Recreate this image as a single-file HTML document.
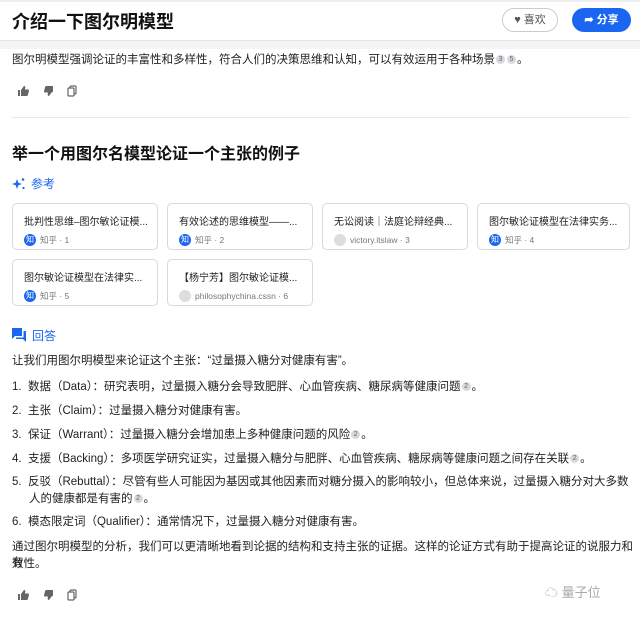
<!DOCTYPE html>
<html><head><meta charset="utf-8"><style>
*{margin:0;padding:0;box-sizing:border-box}
body{width:640px;height:620px;overflow:hidden;background:#fff;font-family:"Liberation Sans","Noto Sans CJK SC",sans-serif;color:#222;position:relative}
.abs{position:absolute}
.hdr{left:0;top:0;width:640px;height:41px;border-bottom:1px solid #e4e4ea;border-top:2px solid #eee;background:#fff}
.title{left:12px;top:8px;font-size:18px;font-weight:bold;color:#111}
.like{left:502px;top:8px;width:56px;height:24px;border:1px solid #ccc;border-radius:13px;font-size:11px;color:#555;line-height:22px;text-align:center}
.share{left:572px;top:8px;width:59px;height:24px;background:#1a66f0;border-radius:13px;font-size:11px;color:#fff;line-height:24px;text-align:center;font-weight:bold}
.t{font-size:11.5px;color:#222;left:12px}
.cite{display:inline-block;width:9px;height:9px;border-radius:50%;background:#d8d8de;font-size:7px;color:#666;text-align:center;line-height:9px;vertical-align:middle;margin:0 1px}
.icons{left:18px}
.div{left:12px;top:117px;width:618px;height:1px;background:#e8e8ec}
.h2{left:12px;top:140px;font-size:16px;font-weight:bold;color:#111}
.sec{left:12px;font-size:12px;color:#1a66f0;display:flex;align-items:center;gap:5px}
.card{width:146px;height:47px;border:1px solid #d8d8de;border-radius:5px;padding:9px 0 0 11px}
.ct{font-size:10px;color:#222;white-space:nowrap}
.cs{font-size:8.5px;color:#777;margin-top:6px;display:flex;align-items:center}
.zl{width:12px;height:12px;border-radius:50%;background:#1a66f0;color:#fff;font-size:8px;text-align:center;line-height:12px;margin-right:4px}
.gl{width:12px;height:12px;border-radius:50%;background:#ddd;margin-right:4px}
</style></head><body>
<div class="abs" style="left:0;top:41px;width:640px;height:8px;background:#f4f4f7"></div>
<div class="abs hdr"></div>
<div class="abs title">介绍一下图尔明模型</div>
<div class="abs like">♥ 喜欢</div>
<div class="abs share">➦ 分享</div>
<div class="abs t" style="top:51px">图尔明模型强调论证的丰富性和多样性，符合人们的决策思维和认知，可以有效运用于各种场景<span class="cite">3</span><span class="cite">5</span>。</div>
<svg class="abs icons" style="top:85px" width="64" height="12" viewBox="0 0 64 12" fill="#666">
<path d="M0 5h2v6H0zM3 5l3-4c1 0 1.5.6 1.3 1.6L7 4.5h3c.7 0 1.2.6 1 1.3l-1.2 4.4c-.2.5-.6.8-1.1.8H3z"/>
<path d="M35 7h-2V1h2zM34 7l-3 4c-1 0-1.5-.6-1.3-1.6L30 7.5h-3c-.7 0-1.2-.6-1-1.3l1.2-4.4c.2-.5.6-.8 1.1-.8H34z"/>
<rect x="52" y="1" width="6" height="8" rx="1" fill="none" stroke="#666" stroke-width="1.2"/><rect x="50" y="3" width="6" height="8" rx="1" fill="#fff" stroke="#666" stroke-width="1.2"/>
</svg>
<div class="abs div"></div>
<div class="abs h2">举一个用图尔名模型论证一个主张的例子</div>
<div class="abs sec" style="top:175px"><svg width="14" height="14" viewBox="0 0 14 14" fill="#1a66f0"><path d="M5 2l1.3 3.7L10 7 6.3 8.3 5 12 3.7 8.3 0 7l3.7-1.3z"/><circle cx="11" cy="2.5" r="1.3"/><circle cx="11.5" cy="11" r="1.1"/></svg>参考</div>
<div class="abs card" style="left:12px;top:203px"><div class="ct">批判性思维–图尔敏论证模...</div><div class="cs"><span class="zl">知</span>知乎 · 1</div></div>
<div class="abs card" style="left:167px;top:203px"><div class="ct">有效论述的思维模型——...</div><div class="cs"><span class="zl">知</span>知乎 · 2</div></div>
<div class="abs card" style="left:322px;top:203px"><div class="ct">无讼阅读｜法庭论辩经典...</div><div class="cs"><span class="gl"></span>victory.itslaw · 3</div></div>
<div class="abs card" style="left:477px;top:203px;width:153px"><div class="ct">图尔敏论证模型在法律实务...</div><div class="cs"><span class="zl">知</span>知乎 · 4</div></div>
<div class="abs card" style="left:12px;top:259px"><div class="ct">图尔敏论证模型在法律实...</div><div class="cs"><span class="zl">知</span>知乎 · 5</div></div>
<div class="abs card" style="left:167px;top:259px"><div class="ct">【杨宁芳】图尔敏论证模...</div><div class="cs"><span class="gl"></span>philosophychina.cssn · 6</div></div>
<div class="abs sec" style="top:327px"><svg width="15" height="15" viewBox="0 0 15 15" fill="#1a66f0"><path d="M0 0h10v8H3L0 11z"/><path d="M11.5 3H14v11l-3-3H4V9.5h7.5z"/></svg>回答</div>
<div class="abs t" style="top:352px">让我们用图尔明模型来论证这个主张：“过量摄入糖分对健康有害”。</div>
<div class="abs t" style="top:378px">1.&nbsp; 数据（Data）：研究表明，过量摄入糖分会导致肥胖、心血管疾病、糖尿病等健康问题<span class="cite">2</span>。</div>
<div class="abs t" style="top:402px">2.&nbsp; 主张（Claim）：过量摄入糖分对健康有害。</div>
<div class="abs t" style="top:426px">3.&nbsp; 保证（Warrant）：过量摄入糖分会增加患上多种健康问题的风险<span class="cite">2</span>。</div>
<div class="abs t" style="top:450px">4.&nbsp; 支援（Backing）：多项医学研究证实，过量摄入糖分与肥胖、心血管疾病、糖尿病等健康问题之间存在关联<span class="cite">2</span>。</div>
<div class="abs t" style="top:473px">5.&nbsp; 反驳（Rebuttal）：尽管有些人可能因为基因或其他因素而对糖分摄入的影响较小，但总体来说，过量摄入糖分对大多数</div>
<div class="abs t" style="top:490px;left:29px">人的健康都是有害的<span class="cite">2</span>。</div>
<div class="abs t" style="top:513px">6.&nbsp; 模态限定词（Qualifier）：通常情况下，过量摄入糖分对健康有害。</div>
<div class="abs t" style="top:538px">通过图尔明模型的分析，我们可以更清晰地看到论据的结构和支持主张的证据。这样的论证方式有助于提高论证的说服力和有</div>
<div class="abs t" style="top:555px">效性。</div>
<svg class="abs icons" style="top:589px" width="64" height="12" viewBox="0 0 64 12" fill="#666">
<path d="M0 5h2v6H0zM3 5l3-4c1 0 1.5.6 1.3 1.6L7 4.5h3c.7 0 1.2.6 1 1.3l-1.2 4.4c-.2.5-.6.8-1.1.8H3z"/>
<path d="M35 7h-2V1h2zM34 7l-3 4c-1 0-1.5-.6-1.3-1.6L30 7.5h-3c-.7 0-1.2-.6-1-1.3l1.2-4.4c.2-.5.6-.8 1.1-.8H34z"/>
<rect x="52" y="1" width="6" height="8" rx="1" fill="none" stroke="#666" stroke-width="1.2"/><rect x="50" y="3" width="6" height="8" rx="1" fill="#fff" stroke="#666" stroke-width="1.2"/>
</svg>
<div class="abs" style="left:545px;top:582px;font-size:13px;color:#aaa">☁ 量子位</div>
</body></html>
